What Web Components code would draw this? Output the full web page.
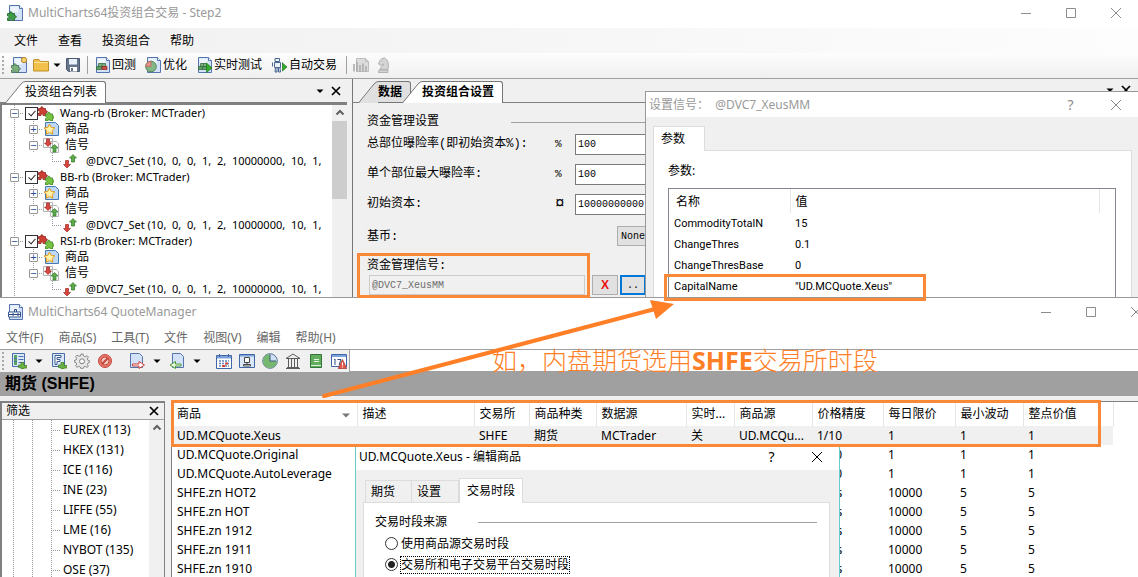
<!DOCTYPE html>
<html lang="zh-CN">
<head>
<meta charset="utf-8">
<title>MultiCharts64</title>
<style>
  html, body { margin: 0; height: 100%; }
  body {
    display: flex; flex-direction: column; position: relative; overflow: hidden;
    background: #fff; color: #000;
    font: 12px/16px "Noto Sans", "Noto Sans CJK SC", sans-serif;
    --ui: "Noto Sans", "Noto Sans CJK SC", sans-serif;
    --mono: "Liberation Mono", "Noto Sans CJK SC", monospace;
    --face: #f0f0f0; --line: #a0a0a0; --mark: #f98937;
  }
</style>
</head>
<body>
<portfolio-window></portfolio-window>
<quote-window></quote-window>
<note-layer></note-layer>

<script>
const define = (name, css, html) => customElements.define(name, class extends HTMLElement {
  connectedCallback() {
    if (this.shadowRoot) return;
    this.attachShadow({ mode: 'open' }).innerHTML =
      `<style>*{box-sizing:border-box}${css}</style>` + (typeof html === 'function' ? html(this) : html);
  }
});

/* ---------- icons ---------- */
const page = '<path d="M2.500.5h10l3 3v12h-13z" fill="#d3e2f8" stroke="#5474ad"/><path d="M3.500 1.500h8v6h-8z" fill="#edf4fd"/><path d="M12.500.5v3h3" fill="#fff" stroke="#5474ad"/>';
const plus = '<path d="M10 9.500h3V12.500h3v2.500h-3V16h-3v-1.500H7.500v-2.500H10z" fill="#6cb33f" stroke="#3c7a2c" stroke-width=".7"/>';
const puzzle = (x, y, f, s) => `<path transform="translate(${x} ${y})" d="M0 3h2.500C1.500.5 5 .5 4.500 3H7v2.300C9.500 4.500 9.500 8 7 7.300V10H4.600C5 8 2.200 8 2.500 10H0V7.500C2 8 2 5 0 5.500z" fill="${f}" stroke="${s}" stroke-width=".8"/>`;
const arrowUp = (x, y) => `<path transform="translate(${x} ${y})" d="M4 .5 7.500 4H5.500v4h-3V4H.5z" fill="#5daa4a" stroke="#2f7a2b" stroke-width=".7"/>`;
const arrowDown = (x, y) => `<path transform="translate(${x} ${y})" d="M4 8 .5 4.500h2v-4h3v4h2z" fill="#d9453c" stroke="#9c2a22" stroke-width=".7"/>`;
const ICONS = {
  app: page + puzzle(.5, 5.500, '#3f9c46', '#1e6428'),
  quote: page + '<path d="M1.500 8h12v5h-12z" fill="#fff" stroke="#3c5a92"/><path d="M2 10.500h12M6 9v3M11 9v3M7.500 8V5.500h2V8" stroke="#2d4a80" fill="none"/>',
  newp: page + puzzle(.5, 5.500, '#7db07c', '#41714a') + '<circle cx="13" cy="3" r="2.700" fill="#f3cf6b" stroke="#b8862d"/>',
  folder: '<path d="M.5 3V14h15V4.500H7.500L6 2.500H1z" fill="#f2c14b" stroke="#c0902a"/><path d="M1 5.500h14" stroke="#fbe39b"/>',
  save: '<path d="M1.500 1.500h13v13h-11l-2-2z" fill="#66758c" stroke="#4d5b72"/><path d="M4 2h8v5.500H4z" fill="#e9f1fb"/><path d="M5 10h7v4.500H5z" fill="#fff"/><path d="M6 11h2v3H6z" fill="#66758c"/>',
  back: page + '<path d="M4.500 6.500h7v3h-7z" fill="#7fb583" stroke="#356b40" stroke-width=".8"/><path d="M2.500 9.500h5v3h-5z" fill="#5f9f66" stroke="#356b40" stroke-width=".8"/><path d="M8 9.500h5v3H8z" fill="#cf4b45" stroke="#8d2f2b" stroke-width=".8"/><path d="M8 6.500v3" stroke="#356b40" stroke-width=".8"/>',
  opt: page + '<circle cx="6" cy="9.500" r="5.300" fill="#84b686" stroke="#4f8a58"/><path d="M6 9.500V4.200A5.300 5.300 0 0 0 .7 9.500z" fill="#e59086" stroke="#b9625a" stroke-width=".7"/>',
  live: page + '<path d="M4.500 6.500h6v3h-6z" fill="#7fb583" stroke="#356b40" stroke-width=".8"/><path d="M2.500 9.500h8v3h-8z" fill="#5f9f66" stroke="#356b40" stroke-width=".8"/><path d="M7.500 6.500v3M6.500 9.500v3" stroke="#356b40" stroke-width=".8"/><path d="M10.500 6 16 11l-5.500 4.500z" fill="#35ad2c" stroke="#1d7a1d" stroke-width=".7"/>',
  robot: '<path d="M4 1.500h4.500v3H4zM3.500 5.500h6v5h-6z" fill="#eaf1fb" stroke="#4a6490"/><path d="M1.500 5.500v4M11.500 5.500v2M4.500 10.500H6v4.500H4zM7.500 10.500H9l.5 4.500H7.500z" fill="#dbe6f6" stroke="#4a6490"/><path d="M11.500 6 16 10l-4.500 4z" fill="#35ad2c" stroke="#1d7a1d" stroke-width=".7"/>',
  chart0: '<path d="M3.500 1.500h9l3 3v10h-12z" fill="#dcdcdc" stroke="#bdbdbd"/><path d="M12.500 1.500v3h3" fill="none" stroke="#bdbdbd"/><path d="M1 7v7.500M4 5v9.500M7 8v6.500M10 6.500v8M13 9v5.500" stroke="#a9a9a9" stroke-width="1.500"/>',
  horse0: '<path d="M4 13h9v2.500H3.500zM5 12.500c0-3 4-3.500 3.500-5.500L5.500 8.500 3.500 7c1-3 2-5.500 6-6 3.500 1.500 4.500 6 3.500 11.500z" fill="#d4d4d4" stroke="#b0b0b0"/>',
  pair: puzzle(.5, .5, '#cf3f33', '#8e241c') + puzzle(7.500, 6, '#76c442', '#3c8423'),
  star: '<path d="M2.500 1.500h10l3 3v10h-13z" fill="#bcd8f5" stroke="#4779b5"/><path d="m6.500 3 1.700 3.400 3.700.5-2.700 2.600.7 3.700-3.400-1.700-3.300 1.700.6-3.700L1.100 6.900l3.700-.5z" fill="#fff1a8" stroke="#e59b1d"/>',
  sigs: '<path d="M.5 1.500h9v9h-9zM7.500 4.500h6l2 2v9h-8z" fill="#fff" stroke="#b5b5b5"/>' + arrowDown(1, 1.500) + arrowUp(7.500, 7),
  sig: arrowDown(1, 7) + arrowUp(7, 1),
  addlist: '<path d="M1.500.5h12v13h-12z" fill="#dbe8fa" stroke="#4a6ea8"/><path d="M3 2h3v10H3z" fill="#5ba562"/><path d="M7.500 3.500h5M7.500 6.500h5M7.500 9.500h5M3 5.500h3M3 8.500h3" stroke="#4a6ea8"/>' + plus,
  addf: '<path d="M1.500.5h12v13h-12z" fill="#dbe8fa" stroke="#4a6ea8"/><path d="M4 11.500v-9h6v2H6v2h3v2H6v3z" fill="#fff" stroke="#3e5f97"/>' + plus,
  gear: '<path d="M7 1h2l.5 2 1.800.8L13 2.600 14.400 4l-1.100 1.700.7 1.800 1.900.5v1l-1.900 1-.7 1.500 1.100 1.800L13 14.400l-1.800-1.100-1.700.7-.5 1.800H7L6.500 14l-1.800-.7L3 14.400 1.600 13l1.100-1.800L2 9.500.2 9V7.500L2 7l.7-1.600L1.600 3.600 3 2.200l1.800 1L6.500 3z" fill="#e9e9e9" stroke="#7d7d7d" stroke-width=".9"/><circle cx="8" cy="8.300" r="2.500" fill="#f8f8f8" stroke="#7d7d7d"/>',
  stop: '<circle cx="8" cy="8" r="6.500" fill="#e8776a" stroke="#c24a3d"/><circle cx="8" cy="8" r="4" fill="#f7c9c2" stroke="#c24a3d"/><path d="m5 11 6-6" stroke="#c24a3d" stroke-width="2"/>',
  exp: '<path d="M1.500.5h9l3 3v11h-12z" fill="#d3e2f8" stroke="#5474ad"/><path d="M3.500 11h6.500V8.500l5.500 3.500-5.500 3.500V13H3.500z" fill="#fff" stroke="#cf3f33"/>',
  imp: '<path d="M3.500.5h8l3 3v11h-11z" fill="#d3e2f8" stroke="#5474ad"/><path d="M12 11H6.500V8.500L1 12l5.500 3.500V13H12z" fill="#e7f6df" stroke="#4d9a35"/>',
  cal: '<path d="M.5 2.500h15v13H.5z" fill="#fff" stroke="#3f66a6"/><path d="M1 3h14v2.500H1z" fill="#7ea3d8"/><path d="M3.500 1v3M12.500 1v3" stroke="#3f66a6"/><path d="M3 8h10M3 10.500h10M3 13h10" stroke="#5e83bd" stroke-width="1.500" stroke-dasharray="2 1"/><path d="M9 9.500h3v2H9zM6 12h3v2H6z" fill="#d4453b"/>',
  pc: '<path d="M.5 1.500h15v13H.5z" fill="#dbe8fa" stroke="#3f66a6"/><path d="M1 2h14v1.500H1z" fill="#7ea3d8"/><path d="M5.500 4.500h5v5h-5zM4.500 11.500h7v1.500h-7zM8 9.500v2" fill="#fff" stroke="#444"/>',
  clock: '<circle cx="8" cy="8" r="7.300" fill="#cfe0f5" stroke="#5a7396"/><path d="M8 8V1A7 7 0 1 0 15 8z" fill="#76b86f"/><path d="M8 1.500V8h6" fill="none" stroke="#3d5a7d"/>',
  bank: '<path d="M8 1 15 5.500H1zM2 14.500h12M1 15.500h14M3.500 6v8M6.500 6v8M9.500 6v8M12.500 6v8" fill="#eee" stroke="#5c5c5c"/>',
  book: '<path d="M2.500 1.500h11v13h-11z" fill="#63ad5e" stroke="#31753a"/><path d="M3 12.500h10" stroke="#dcefd8"/><path d="M6 6.500h5M6 8.500h5" stroke="#e7f5e3"/>',
  caltri: '<path d="M.5 1.500h15v12H.5z" fill="#fff" stroke="#3f66a6"/><path d="M1 2h14v2H1z" fill="#7ea3d8"/><path d="M4 6v6M3 7l1-1M6.500 6.500H10L8 12" fill="none" stroke="#2d4a80"/><path d="m11.500 6.500 4.300 9H7.200z" fill="#e2574c" stroke="#a52f27" stroke-width=".7"/><path d="M11.500 9.500v3M11.500 13.500v1" stroke="#fff"/>',
  min: '<path d="M3 8.500h10" stroke="currentColor"/>',
  max: '<path d="M3.500 3.500h9v9h-9z" fill="none" stroke="currentColor"/>',
  close: '<path d="m3 3 10 10M13 3 3 13" fill="none" stroke="currentColor"/>',
  x: '<path d="m4 4 8 8M12 4l-8 8" fill="none" stroke="#000" stroke-width="1.700"/>',
  caret: '<path d="M4.500 6.500h7L8 10z" fill="#000"/>',
  sort: '<path d="M4 6.500h8L8 10.500z" fill="#777"/>',
  up: '<path d="m4.500 9.500 3.500-3.500 3.500 3.500" fill="none" stroke="#606060" stroke-width="2"/>'
};
define('mc-icon', ':host{display:block;flex:none;width:16px;height:16px}svg{display:block}',
  el => `<svg width="16" height="16" viewBox="0 0 16 16" aria-hidden="true">${ICONS[el.getAttribute('name')]}</svg>`);

/* ---------- shared chrome ---------- */
define('title-bar', `
  :host{display:flex;align-items:center;height:28px;padding-left:7px;background:#fff;color:#999;font-size:12px}
  mc-icon{margin-right:5px}
  .t{flex:1;white-space:pre}
  button{display:flex;justify-content:center;align-items:center;width:45px;height:24px;padding:0;border:0;background:none;color:#8c8c8c}
  button mc-icon{margin:0}`,
  el => `<mc-icon name="${el.getAttribute('icon')}"></mc-icon><span class="t"><slot></slot></span>` +
    ['min', 'max', 'close'].map(n => `<button aria-label="${n}"><mc-icon name="${n}"></mc-icon></button>`).join(''));

define('menu-bar', `
  :host{display:flex;align-items:center;height:25px}
  nav{display:flex;gap:var(--menu-gap)}
  button{padding:0;border:0;background:none;font:inherit;color:inherit}`,
  el => `<nav>${el.getAttribute('items').split('|').map(t => `<button>${t}</button>`).join('')}</nav>`);

define('tool-button', `
  :host{display:block;flex:none}
  button{display:flex;align-items:center;gap:2px;padding:0;border:0;background:none;font:inherit;color:inherit}`,
  el => `<button aria-label="${el.getAttribute('icon')}"><mc-icon name="${el.getAttribute('icon')}"></mc-icon><slot></slot></button>`);

define('tool-sep', ':host{display:block;width:1px;height:18px;background:#a0a0a0}', '');
define('tool-grip', ':host{display:block;width:2px;height:18px;border-left:2px dotted #aaa}', '');

define('slant-tab', `
  :host{display:flex;position:relative;height:22px;line-height:20px}
  svg{display:block;flex:none}
  span{border:1px solid #777;border-width:1px 1px 0 0;border-radius:0 3px 0 0;padding-right:8px;background:var(--tab);height:22px;white-space:nowrap}
  :host([active]){z-index:1}
  :host([active]) span{--tab:#fff} :host([active]) path{fill:#fff}
  :host(:not([active])) {--tab:#e0e0e0} :host(:not([active])) span{border-bottom:1px solid #777}`,
  `<svg width="20" height="22" viewBox="0 0 20 22"><path d="M.5 22 16 3Q18 .5 20 .5V22" fill="#e0e0e0"/><path d="M.5 22 16 3Q18 .5 20.500.5" fill="none" stroke="#777" style="fill:none"/></svg><span><slot></slot></span>`);

define('scroll-bar', `
  :host{display:flex;flex-direction:column;align-items:center;width:15px;background:#f0f0f0;flex:none}
  i{display:block;width:15px;height:var(--thumb,0);background:#cdcdcd}`,
  '<mc-icon name="up"></mc-icon><i></i>');

/* ---------- portfolio tree ---------- */
const GUIDE = { v: '<i class="v"></i>', l: '<i class="v h end"></i>' };
const box = open => `<i class="v h"><b>${open ? '−' : '+'}</b></i>`;
define('portfolio-tree', `
  :host{display:flex;background:#fff;border:solid #808080;border-width:2px 0 0 2px;font-size:12px}
  ul{flex:1;margin:0;padding:0 0 0 3px;list-style:none;overflow:hidden;min-width:0}
  li{display:flex;align-items:center;height:16px;white-space:pre;overflow:hidden}
  i{position:relative;flex:none;width:19px;height:16px;font-style:normal}
  i.v{background:repeating-linear-gradient(#999 0 1px,transparent 1px 2px) 9px 0/1px 16px no-repeat}
  i.h{background:repeating-linear-gradient(#999 0 1px,transparent 1px 2px) 9px 0/1px 16px no-repeat,repeating-linear-gradient(90deg,#999 0 1px,transparent 1px 2px) 9px 8px/10px 1px no-repeat}
  i.end{background-size:1px 8px,10px 1px}
  b{position:absolute;left:5px;top:4px;width:9px;height:9px;border:1px solid #969696;border-radius:1px;background:#fff;color:#2f4f9f;font:11px/7px "Liberation Sans";text-align:center}
  input{appearance:none;position:relative;flex:none;width:13px;height:13px;margin:0 0 0 1px;border:1px solid #333;background:#fff}
  input::after{content:"";position:absolute;left:4px;top:1px;width:3px;height:6px;border:solid #333;border-width:0 1px 1px 0;transform:rotate(42deg)}
  span{margin-left:6px} label{margin-left:6px;font-size:11px;line-height:14px} .s{font-size:11px;line-height:14px;margin-left:8px}`,
  () => '<ul role="tree">' + ['Wang-rb', 'BB-rb', 'RSI-rb'].map((n, k) => `
    <li role="treeitem">${box(1)}<input type="checkbox" id="p${k}" checked><mc-icon name="pair"></mc-icon><label for="p${k}">${n} (Broker: MCTrader)</label></li>
    <li role="treeitem">${GUIDE.v}${box(0)}<mc-icon name="star"></mc-icon><span>商品</span></li>
    <li role="treeitem">${GUIDE.v}${box(1)}<mc-icon name="sigs"></mc-icon><span>信号</span></li>
    <li role="treeitem">${GUIDE.v}<i></i>${GUIDE.l}<mc-icon name="sig"></mc-icon><span class="s">@DVC7_Set (10,  0,  0,  1,  2,  10000000,  10,  1,</span></li>`).join('') +
    '</ul><scroll-bar style="--thumb:78px"></scroll-bar>');

/* ---------- portfolio settings form ---------- */
define('settings-form', `
  :host{display:block;padding:12px 0 0 14px;background:var(--face);font-family:var(--mono);font-size:12px}
  h2{display:flex;align-items:center;height:14px;margin:0;font:inherit;line-height:14px}
  h2 span{width:144px} h2 i{flex:1;height:1px;background:var(--line)}
  .r{display:flex;align-items:center;height:30px}
  .r label{width:188px} .r em{width:20px;font-style:normal;font-size:11px}
  .r .cur{font-size:16px}
  input{height:21px;width:180px;padding:0 2px;border:1px solid #7a7a7a;background:#fff;font:10px var(--mono);color:#000}
  .base{height:34px} .base label{width:250px;padding-top:2px}
  select{appearance:none;width:120px;height:20px;padding:0 3px;border:1px solid #adadad;border-radius:0;background:#e1e1e1;font:10px var(--mono);color:#000}
  .cap{display:block;height:22px;line-height:26px}
  .sig{display:flex;gap:2px}
  .sig input{width:216px;height:20px;margin:0 5px 0 2px;border:1px solid #ccc;background:var(--face);color:#6d6d6d}
  .sig button{width:26px;height:20px;padding:0;border:1px solid #adadad;background:#e1e1e1;color:#e11;font:bold 12px/16px "Liberation Sans",sans-serif}
  .sig .more{border:2px solid #0078d7;color:#000;font:10px var(--mono)}`,
  `<h2><span>资金管理设置</span><i></i></h2>
   <div class="r"><label for="a">总部位曝险率(即初始资本%):</label><em>%</em><input id="a" value="100"></div>
   <div class="r"><label for="b">单个部位最大曝险率:</label><em>%</em><input id="b" value="100"></div>
   <div class="r"><label for="c">初始资本:</label><em class="cur">¤</em><input id="c" value="10000000000"></div>
   <div class="r base"><label for="d">基币:</label><select id="d"><option>None</option></select></div>
   <label class="cap" for="e">资金管理信号:</label>
   <div class="sig"><input id="e" value="@DVC7_XeusMM" readonly><button>X</button><button class="more">..</button></div>`);

/* ---------- signal parameter dialog ---------- */
define('param-dialog', `
  :host{display:flex;flex-direction:column;background:var(--face);border:1px solid #999;border-width:1px 0 0 1px;overflow:hidden}
  header{display:flex;align-items:center;height:25px;flex:none;padding-left:3px;background:#fff;color:#999}
  header span{flex:1;white-space:pre;font-size:12px}
  header button{width:45px;padding:0;border:0;background:none;color:#8c8c8c;font:14px/20px var(--ui);display:flex;justify-content:center}
  .tab{align-self:flex-start;margin:9px 0 -1px 7px;width:52px;height:25px;flex:none;padding-left:7px;border:1px solid #dcdcdc;border-bottom:0;background:#fff;font:12px/22px var(--ui);text-align:left;position:relative}
  section{flex:1;margin:0 6px 0 7px;padding:10px 15px 0 14px;border:1px solid #dcdcdc;border-bottom:0;background:#fff;display:flex;flex-direction:column;min-height:0}
  .c{height:27px;line-height:20px}
  .list{flex:1;border:1px solid #828790;border-bottom:0;padding:0 15px 0 0;min-height:0}
  table{width:100%;border-collapse:collapse;table-layout:fixed}
  th{height:24px;padding:2px 0 0 7px;font:12px/18px var(--ui);text-align:left;border-right:1px solid #e5e5e5}
  th:first-child{width:121px}
  th+th{padding-left:5px}
  td{height:21px;padding:0 0 0 5px;font:11px/21px Roboto,sans-serif}td+td{padding-left:5px}`,
  `<header><span>设置信号：  @DVC7_XeusMM</span><button aria-label="help">?</button><button aria-label="close"><mc-icon name="close"></mc-icon></button></header>
   <button class="tab" role="tab">参数</button>
   <section><div class="c">参数:</div><div class="list"><table>
   <thead><tr><th>名称</th><th>值</th></tr></thead><tbody>` +
   [['CommodityTotalN', '15'], ['ChangeThres', '0.1'], ['ChangeThresBase', '0'], ['CapitalName', '"UD.MCQuote.Xeus"']]
     .map(r => `<tr><td>${r[0]}</td><td>${r[1]}</td></tr>`).join('') + '</tbody></table></div></section>');

/* ---------- upper window ---------- */
define('portfolio-window', `
  :host{display:block;flex:none;position:relative;overflow:hidden;border-bottom:1px solid #999;background:var(--face)}
  title-bar{padding-bottom:3px}
  menu-bar{padding-left:14px;--menu-gap:20px;background:linear-gradient(90deg,#f0f0f0,#fdfdfd)}
  .tools{display:flex;align-items:center;height:26px;padding:0 0 1px 2px;border-bottom:1px solid var(--line);background:linear-gradient(#fdfdfd,#efefef)}
  .tools>*{margin-right:9px}
  .tools .n{margin-right:6px}
  .tools .m{margin-right:7px}
  .tools .o{margin-right:0}
  .panes{display:grid;grid-template-columns:347px 1fr;column-gap:5px}
  .strip{display:flex;align-items:flex-end;height:24px;border-bottom:1px solid #808080}
  .strip.l{padding:0 3px 0 5px}.strip.r{padding:0 4px 0 5px}
  .strip slant-tab{margin-bottom:-1px}.strip .sp{flex:1}
  .strip mc-icon{margin-bottom:3px}
  .strip.r slant-tab{font-weight:bold}.strip.r slant-tab+slant-tab{margin-left:-9px}
  .strip.r mc-icon{margin-bottom:4px}
  .right{border-left:1px solid #777}
  param-dialog{position:absolute;left:645px;right:0;top:91px;bottom:0}`,
  `<title-bar icon="app">MultiCharts64投资组合交易 - Step2</title-bar>
   <menu-bar items="文件|查看|投资组合|帮助"></menu-bar>
   <div class="tools"><tool-grip class="m"></tool-grip><tool-button class="n" icon="newp"></tool-button><tool-button class="o" icon="folder"></tool-button><tool-button class="o" icon="caret"></tool-button><tool-button class="n" icon="save"></tool-button><tool-sep class="n"></tool-sep>
   <tool-button icon="back">回测</tool-button><tool-button icon="opt">优化</tool-button><tool-button icon="live">实时测试</tool-button><tool-button icon="robot">自动交易</tool-button><tool-sep class="n"></tool-sep><tool-button class="n" icon="chart0"></tool-button><tool-button icon="horse0"></tool-button></div>
   <div class="panes">
     <div><div class="strip l"><slant-tab active>投资组合列表</slant-tab><i class="sp"></i><mc-icon name="caret"></mc-icon><mc-icon name="x"></mc-icon></div><portfolio-tree></portfolio-tree></div>
     <div class="right"><div class="strip r"><slant-tab>数据</slant-tab><slant-tab active>投资组合设置</slant-tab><i class="sp"></i><mc-icon name="caret"></mc-icon><mc-icon name="x"></mc-icon></div><settings-form></settings-form></div>
   </div>
   <param-dialog></param-dialog>`);

/* ---------- quote manager ---------- */
define('filter-tree', `
  :host{display:flex;flex-direction:column;border:2px solid #808080;border-width:2px 1px 0 2px;background:#fff;overflow:hidden;min-height:0}
  header{display:flex;justify-content:space-between;align-items:center;height:17px;flex:none;padding:0 2px 0 4px;background:var(--face);border-bottom:1px solid #a0a0a0}
  .b{display:flex;flex:1;min-height:0}
  ul{flex:1;margin:0;padding:0 0 0 3px;list-style:none;font-size:12px;line-height:14px}
  li{display:flex;height:20px;align-items:center;white-space:nowrap}
  i{width:19px;height:20px;flex:none;background:repeating-linear-gradient(#999 0 1px,transparent 1px 2px) 8px 0/1px 20px no-repeat}
  i:nth-of-type(3){background:repeating-linear-gradient(#999 0 1px,transparent 1px 2px) 8px 0/1px 20px no-repeat,repeating-linear-gradient(90deg,#999 0 1px,transparent 1px 2px) 8px 10px/10px 1px no-repeat}
  span{margin-left:1px}`,
  '<header>筛选<mc-icon name="x"></mc-icon></header><div class="b"><ul>' +
  ['EUREX (113)', 'HKEX (131)', 'ICE (116)', 'INE (23)', 'LIFFE (55)', 'LME (16)', 'NYBOT (135)', 'OSE (37)']
    .map(t => `<li><i></i><i></i><i></i><span>${t}</span></li>`).join('') + '</ul><scroll-bar></scroll-bar></div>');

const COLS = [['商品', 185], ['描述', 117], ['交易所', 55], ['商品种类', 67], ['数据源', 90], ['实时...', 48], ['商品源', 78], ['价格精度', 71], ['每日限价', 72], ['最小波动', 68], ['整点价值', 90]];
const ROWS = [
  ['UD.MCQuote.Xeus', '', 'SHFE', '期货', 'MCTrader', '关', 'UD.MCQu...', '1/10', '1', '1', '1'],
  ['UD.MCQuote.Original', '', '', '', '', '', '', '1/10', '1', '1', '1'],
  ['UD.MCQuote.AutoLeverage', '', '', '', '', '', '', '1/10', '1', '1', '1'],
  ...['HOT2', 'HOT', '1912', '1911', '1910'].map(n => ['SHFE.zn ' + n, '', '', '', '', '', '', 'ticks', '10000', '5', '5'])
];
define('symbol-table', `
  :host{display:block;overflow:hidden;border-left:1px solid #808080;border-top:1px solid #808080;background:#fff}
  table{border-collapse:collapse;table-layout:fixed;width:941px}
  th{position:relative;height:24px;padding:0 0 0 5px;text-align:left;font-weight:normal;border-right:1px solid #e5e5e5;white-space:nowrap}
  th mc-icon{position:absolute;right:3px;top:5px}
  td{height:19px;padding:0 0 0 5px;line-height:18px;white-space:nowrap;overflow:hidden}
  tr.sel{background:#f0f0f0}`,
  () => `<table><colgroup>${COLS.map(c => `<col style="width:${c[1]}px">`).join('')}</colgroup>
   <thead><tr>${COLS.map((c, i) => `<th>${c[0]}${i ? '' : '<mc-icon name="sort"></mc-icon>'}</th>`).join('')}</tr></thead>
   <tbody>${ROWS.map((r, i) => `<tr class="${i ? '' : 'sel'}">${r.map(c => `<td>${c}</td>`).join('')}</tr>`).join('')}</tbody></table>`);

define('edit-dialog', `
  :host{display:flex;flex-direction:column;background:var(--face);border:solid #6cc;border-width:0 1px;overflow:hidden}
  header{display:flex;align-items:center;height:24px;flex:none;padding:0 0 2px 3px;background:#fff}
  header span{flex:1}
  header button{width:45px;padding:0;border:0;background:none;font:14px/18px var(--ui);display:flex;justify-content:center;color:#000}
  nav{display:flex;align-items:flex-end;height:33px;flex:none;padding-left:9px;margin-bottom:-1px;position:relative}
  nav button{height:23px;width:47px;padding:0 0 0 5px;border:1px solid #dcdcdc;background:var(--face);font:inherit;text-align:left}
  nav button+button{border-left:0}
  nav .on{width:64px;height:25px;padding-left:7px;border-left:1px solid #dcdcdc;border-bottom:0;background:#fff}
  section{flex:1;margin:0 9px 0 7px;padding:8px 12px 0 11px;border:1px solid #dcdcdc;border-bottom:0;background:#fff}
  h3{display:flex;align-items:center;margin:0;height:22px;font:inherit} h3 span{width:103px} h3 i{flex:1;height:1px;background:var(--line)}
  .o{display:flex;align-items:center;height:21px;padding-left:10px}
  input{appearance:none;width:13px;height:13px;margin:0 3px 0 0;border:1px solid #333;border-radius:50%;background:#fff}
  input:checked{background:radial-gradient(circle,#222 0 3px,#fff 4px)}
  .f{outline:1px dotted #000}`,
  `<header><span>UD.MCQuote.Xeus - 编辑商品</span><button aria-label="help">?</button><button aria-label="close"><mc-icon name="close"></mc-icon></button></header>
   <nav role="tablist"><button role="tab">期货</button><button role="tab">设置</button><button role="tab" class="on">交易时段</button></nav>
   <section><h3><span>交易时段来源</span><i></i></h3>
   <div class="o"><input type="radio" name="s" id="s1"><label for="s1">使用商品源交易时段</label></div>
   <div class="o"><input type="radio" name="s" id="s2" checked><label class="f" for="s2">交易所和电子交易平台交易时段</label></div></section>`);

define('quote-window', `
  :host{display:flex;flex-direction:column;flex:1;min-height:0;overflow:hidden;background:#fff}
  title-bar{margin-right:-20px}
  menu-bar{padding-left:6px;--menu-gap:15px;color:#666;height:23px}
  .tools{display:flex;border-top:1px solid var(--line);height:23px;flex:none}
  .bar{display:flex;align-items:center;width:350px;flex:none;padding-left:2px;background:var(--face);border-right:1px solid var(--line)}
  .bar>*{margin-right:7px}
  .bar .n{margin-right:4px}
  .bar .w{margin-right:9px}
  .fill{flex:1;border-bottom:1px solid var(--line)}
  h1{margin:0;height:24px;flex:none;padding-left:5px;background:#a0a0a0;font:bold 16px/24px "Liberation Sans","Noto Sans CJK SC",sans-serif}
  .work{position:relative;flex:1;min-height:0;display:grid;grid-template-columns:165px 1fr;grid-template-rows:minmax(0,1fr);column-gap:6px;padding-top:5px;background:var(--face)}
  edit-dialog{position:absolute;left:355px;width:485px;top:50px;bottom:0}`,
  `<title-bar icon="quote">MultiCharts64 QuoteManager</title-bar>
   <menu-bar items="文件(F)|商品(S)|工具(T)|文件|视图(V)|编辑|帮助(H)"></menu-bar>
   <div class="tools"><div class="bar"><tool-grip></tool-grip>
   <tool-button class="n" icon="addlist"></tool-button><tool-button class="n" icon="caret"></tool-button><tool-button icon="addf"></tool-button><tool-button icon="gear"></tool-button><tool-button icon="stop"></tool-button><tool-sep class="w"></tool-sep>
   <tool-button class="n" icon="exp"></tool-button><tool-button class="n" icon="caret"></tool-button><tool-button class="n" icon="imp"></tool-button><tool-button class="n" icon="caret"></tool-button><tool-sep></tool-sep>
   <tool-button icon="cal"></tool-button><tool-button icon="pc"></tool-button><tool-button icon="clock"></tool-button><tool-button icon="bank"></tool-button><tool-button icon="book"></tool-button><tool-button icon="caltri"></tool-button></div><div class="fill"></div></div>
   <h1>期货 (SHFE)</h1>
   <div class="work"><filter-tree></filter-tree><symbol-table></symbol-table><edit-dialog></edit-dialog></div>`);

/* ---------- annotations drawn over both windows ---------- */
define('note-layer', `
  :host{position:absolute;inset:0;pointer-events:none}
  div{position:absolute;border:3px solid var(--mark)}
  .a{left:357px;top:253px;width:233px;height:45px}
  .b{left:664px;top:274px;width:262px;height:27px}
  .c{left:171px;top:400px;width:930px;height:47px}
  svg{position:absolute;left:0;top:0}
  p{position:absolute;left:492px;top:342px;margin:0;font-size:25px;line-height:36px;font-weight:300;color:#ff7f27;white-space:nowrap}
  p b{font-weight:700}`,
  `<div class="a"></div><div class="b"></div><div class="c"></div>
   <svg width="700" height="420"><path d="m324 396 331-87" stroke="#ff7f27" stroke-width="4" stroke-linecap="round"/><path d="m650 300 24 4-18 15z" fill="#ff7f27"/></svg>
   <p>如，内盘期货选用<b>SHFE</b>交易所时段</p>`);
</script>
</body>
</html>
